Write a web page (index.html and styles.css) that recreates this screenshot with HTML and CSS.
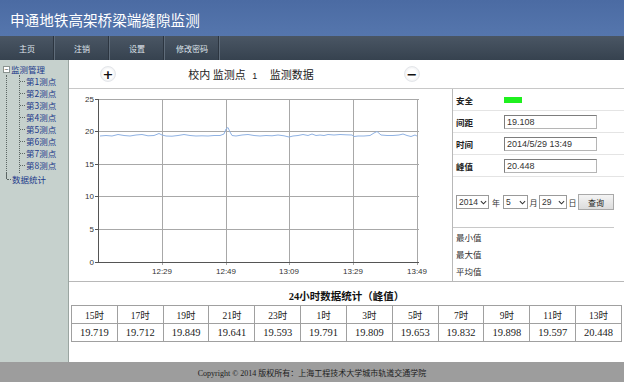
FILE: index.html
```html
<!DOCTYPE html>
<html lang="zh-CN">
  <head>
    <meta charset="UTF-8" />
    <title>申通地铁高架桥梁端缝隙监测</title>
    <link rel="stylesheet" href="styles.css">
  </head>
  <body>
    <header class="top-header">
      <h1>申通地铁高架桥梁端缝隙监测</h1>
    </header>
    <nav class="menu-bar">
      <a class="menu-item">主页</a>
      <a class="menu-item">注销</a>
      <a class="menu-item">设置</a>
      <a class="menu-item">修改密码</a>
    </nav>
    <div class="page-body">
      <aside class="side-tree">
        <div class="tree-root"><span class="tree-box">−</span><span class="tree-label">监测管理</span></div>
        <div class="tree-branch">
          <ul class="tree-leaves">
            <li><span class="tree-dash"></span>第1测点</li>
            <li><span class="tree-dash"></span>第2测点</li>
            <li><span class="tree-dash"></span>第3测点</li>
            <li><span class="tree-dash"></span>第4测点</li>
            <li><span class="tree-dash"></span>第5测点</li>
            <li><span class="tree-dash"></span>第6测点</li>
            <li><span class="tree-dash"></span>第7测点</li>
            <li><span class="tree-dash"></span>第8测点</li>
          </ul>
        </div>
        <div class="tree-last"><span class="tree-dash short"></span>数据统计</div>
      </aside>
      <main class="content">
        <div class="chart-head">
          <span class="round-btn">+</span>
          <h2 class="chart-title">校内 监测点 <span class="point-no">1</span> 监测数据</h2>
          <span class="round-btn">−</span>
        </div>
        <div class="monitor-row">
          <div class="chart-box">
            <svg width="383" height="193" viewBox="0 0 383 193">
              <g stroke="#a8a8a8" stroke-width="1">
                <line x1="29" y1="10.5" x2="350" y2="10.5" />
                <line x1="29" y1="42.5" x2="350" y2="42.5" />
                <line x1="29" y1="75.5" x2="350" y2="75.5" />
                <line x1="29" y1="107.5" x2="350" y2="107.5" />
                <line x1="29" y1="140.5" x2="350" y2="140.5" />
                <line x1="93.5" y1="10" x2="93.5" y2="176" />
                <line x1="157.5" y1="10" x2="157.5" y2="176" />
                <line x1="220.5" y1="10" x2="220.5" y2="176" />
                <line x1="284.5" y1="10" x2="284.5" y2="176" />
                <line x1="348.5" y1="10" x2="348.5" y2="176" />
              </g>
              <g stroke="#555" stroke-width="1">
                <line x1="29.5" y1="10" x2="29.5" y2="173" />
                <line x1="29" y1="173.5" x2="350" y2="173.5" />
                <line x1="26" y1="10.5" x2="29" y2="10.5" />
                <line x1="26" y1="42.5" x2="29" y2="42.5" />
                <line x1="26" y1="75.5" x2="29" y2="75.5" />
                <line x1="26" y1="107.5" x2="29" y2="107.5" />
                <line x1="26" y1="140.5" x2="29" y2="140.5" />
                <line x1="26" y1="173.5" x2="29" y2="173.5" />
              </g>
              <g class="axis-text" text-anchor="end">
                <text x="25" y="13">25</text>
                <text x="25" y="45">20</text>
                <text x="25" y="78">15</text>
                <text x="25" y="110">10</text>
                <text x="25" y="143">5</text>
                <text x="25" y="176">0</text>
              </g>
              <g class="axis-text" text-anchor="middle">
                <text x="93" y="185">12:29</text>
                <text x="157" y="185">12:49</text>
                <text x="220" y="185">13:09</text>
                <text x="284" y="185">13:29</text>
                <text x="348" y="185">13:49</text>
              </g>
              <polyline fill="none" stroke="#8fb2e3" stroke-width="1"
                points="31,47 37,46.5 43,47 49,45.5 55,46.5 61,47 67,46 73,45.5 79,46.8 85,46.5 90,44.5 93,46 97,47 103,47.2 109,46.5 115,45.5 121,46.5 127,47 133,46.8 139,47 145,46.5 151,46.5 155,45 157,40 159,38.5 161,43 163,46.5 167,47 173,46 179,45.5 185,46.5 191,47 197,46.5 203,46.8 209,46 215,46.8 220,48 224,47 229,46.5 234,45.5 239,46.5 243,45 247,46.5 251,46 255,46.5 259,45.5 265,46 271,45.5 277,45.8 283,46 285,47.5 289,47 295,47 301,46.5 305,44 308,42.5 312,46 318,46.5 324,46.5 330,46 334,45 338,46.5 342,47.5 346,46 348,47" />
            </svg>
          </div>
          <div class="info-panel">
            <div class="info-row">
              <span class="info-label">安全</span>
              <span class="safe-mark"></span>
            </div>
            <div class="info-row">
              <span class="info-label">间距</span>
              <span class="info-input">19.108</span>
            </div>
            <div class="info-row">
              <span class="info-label">时间</span>
              <span class="info-input">2014/5/29 13:49</span>
            </div>
            <div class="info-row">
              <span class="info-label">峰值</span>
              <span class="info-input">20.448</span>
            </div>
            <div class="date-row">
              <span class="fake-select year">2014<svg class="chev" width="7" height="5" viewBox="0 0 8 5"><path d="M1 1l3 3 3-3" fill="none" stroke="#333" stroke-width="1.2"/></svg></span>
              <span class="date-unit wide">年</span>
              <span class="fake-select month">5<svg class="chev" width="7" height="5" viewBox="0 0 8 5"><path d="M1 1l3 3 3-3" fill="none" stroke="#333" stroke-width="1.2"/></svg></span>
              <span class="date-unit">月</span>
              <span class="fake-select day">29<svg class="chev" width="7" height="5" viewBox="0 0 8 5"><path d="M1 1l3 3 3-3" fill="none" stroke="#333" stroke-width="1.2"/></svg></span>
              <span class="date-unit">日</span>
              <button class="query-btn">查询</button>
            </div>
            <ul class="summary">
              <li>最小值</li>
              <li>最大值</li>
              <li>平均值</li>
            </ul>
          </div>
        </div>
        <h3 class="stats-title">24小时数据统计（峰值）</h3>
        <table class="stats-table">
          <tr class="hour-row">
            <td>15时</td><td>17时</td><td>19时</td><td>21时</td><td>23时</td><td>1时</td>
            <td>3时</td><td>5时</td><td>7时</td><td>9时</td><td>11时</td><td>13时</td>
          </tr>
          <tr class="value-row">
            <td>19.719</td><td>19.712</td><td>19.849</td><td>19.641</td><td>19.593</td><td>19.791</td>
            <td>19.809</td><td>19.653</td><td>19.832</td><td>19.898</td><td>19.597</td><td>20.448</td>
          </tr>
        </table>
      </main>
    </div>
    <footer class="page-footer">Copyright © 2014 版权所有：上海工程技术大学城市轨道交通学院</footer>
  </body>
</html>
```

FILE: styles.css
```css
* {
  box-sizing: border-box;
}
body {
  margin: 0;
  width: 624px;
  height: 382px;
  overflow: hidden;
  display: flex;
  flex-direction: column;
  font-family: "Liberation Sans", "Noto Sans CJK SC", sans-serif;
  color: #222;
}

.top-header {
  flex: none;
  height: 36px;
  background: linear-gradient(#4b6ba3, #5576ad);
  display: flex;
  align-items: center;
  padding-left: 10px;
}
.top-header h1 {
  margin: 0;
  padding-top: 3px;
  font-family: "Noto Sans CJK SC", sans-serif;
  font-weight: normal;
  font-size: 14.6px;
  color: #fff;
}

.menu-bar {
  flex: none;
  height: 24px;
  display: flex;
  background: linear-gradient(#4a5664, #36424f);
}
.menu-item {
  width: 55px;
  display: flex;
  align-items: center;
  justify-content: center;
  border-right: 1px solid #5f6c7a;
  box-shadow: inset -1px 0 0 #2c3540;
  font-family: "Noto Sans CJK SC", sans-serif;
  font-size: 8px;
  color: #dfe4eb;
}

.page-body {
  flex: none;
  display: flex;
  height: 302px;
}

.side-tree {
  flex: none;
  width: 69px;
  background: #c6d1cd;
  border-right: 1px solid #9aa5a1;
  padding: 3px 0 0 3px;
  font-family: "Noto Sans CJK SC", sans-serif;
  font-size: 8.5px;
  color: #22398a;
  line-height: 12px;
  white-space: nowrap;
}
.tree-root {
  display: flex;
  align-items: center;
  height: 12px;
}
.tree-box {
  width: 7px;
  height: 7px;
  border: 1px solid #8a9390;
  background: #fff;
  font-size: 7px;
  line-height: 5px;
  text-align: center;
  color: #333;
  margin-right: 1px;
}
.tree-branch {
  margin-left: 3px;
  border-left: 1px dotted #5c6664;
}
.tree-leaves {
  list-style: none;
  margin: 0 0 0 12px;
  padding: 0 0 2px;
  border-left: 1px dotted #5c6664;
}
.tree-leaves li {
  height: 12px;
  display: flex;
  align-items: center;
}
.tree-dash {
  flex: none;
  width: 5px;
  border-top: 1px dotted #5c6664;
  margin-right: 1px;
}
.tree-dash.short {
  width: 4px;
}
.tree-last {
  margin-left: 3px;
  height: 12px;
  display: flex;
  align-items: center;
  border-left: 1px dotted #5c6664;
  border-image: linear-gradient(#5c6664 50%, transparent 50%) 1;
}

.content {
  flex: 1;
  min-width: 0;
  display: flex;
  flex-direction: column;
  background: #fff;
}

.chart-head {
  flex: none;
  height: 29px;
  display: flex;
  align-items: center;
  padding-left: 31px;
  padding-right: 204px;
  border-bottom: 1px solid #c8c8c8;
}
.round-btn {
  flex: none;
  width: 16px;
  height: 16px;
  border-radius: 50%;
  background: radial-gradient(#ffffff 45%, #e2e4e8);
  border: 1px solid #e4e6ea;
  display: flex;
  align-items: center;
  justify-content: center;
  font-family: "DejaVu Sans", sans-serif;
  font-weight: bold;
  font-size: 13px;
  line-height: 1;
  color: #111;
}
.chart-title {
  flex: 1;
  margin: 0 18px 0 0;
  text-align: center;
  font-family: "Noto Sans CJK SC", sans-serif;
  font-weight: normal;
  font-size: 11px;
  color: #222;
  white-space: nowrap;
}
.point-no {
  font-family: "Liberation Sans", sans-serif;
  font-size: 9px;
  margin: 0 10px 0 4px;
}

.monitor-row {
  flex: none;
  display: flex;
  height: 193px;
  border-bottom: 1px solid #b8b8b8;
}
.chart-box {
  flex: none;
  width: 383px;
}
.chart-box svg {
  display: block;
}
.axis-text {
  font-family: "Liberation Sans", sans-serif;
  font-size: 8px;
  fill: #333;
}

.info-panel {
  flex: 1;
  min-width: 0;
  border-left: 1px solid #b8b8b8;
  display: flex;
  flex-direction: column;
}
.info-row {
  height: 22px;
  display: flex;
  align-items: center;
  padding-left: 3px;
  border-bottom: 1px solid #e4e4e4;
}
.info-label {
  flex: none;
  width: 48px;
  font-family: "Noto Sans CJK SC", sans-serif;
  font-weight: bold;
  font-size: 8.5px;
}
.safe-mark {
  width: 18px;
  height: 6px;
  background: #1ff01f;
}
.info-input {
  width: 93px;
  height: 14px;
  border: 1px solid #7d7d7d;
  border-right-color: #b5b5b5;
  border-bottom-color: #b5b5b5;
  padding-left: 2px;
  font-size: 9px;
  line-height: 12px;
  color: #333;
  white-space: nowrap;
}

.date-row {
  height: 51px;
  display: flex;
  align-items: center;
  padding-left: 3px;
  margin-right: 10px;
  border-bottom: 1px solid #c8c8c8;
}
.fake-select {
  flex: none;
  height: 14px;
  border: 1px solid #9a9a9a;
  display: flex;
  align-items: center;
  justify-content: space-between;
  padding: 0 1px 0 2px;
  font-size: 8.5px;
  color: #333;
}
.fake-select.year {
  width: 33px;
}
.fake-select.month {
  width: 25px;
}
.fake-select.day {
  width: 28px;
}
.chev {
  display: block;
}
.date-unit {
  flex: none;
  width: 11px;
  text-align: center;
  font-family: "Noto Sans CJK SC", sans-serif;
  font-size: 8px;
  color: #333;
}
.date-unit.wide {
  width: 14px;
}
.query-btn {
  flex: none;
  width: 36px;
  height: 16px;
  padding: 0;
  border: 1px solid #a9a9a9;
  background: linear-gradient(#f4f4f4, #dcdcdc);
  font-family: "Noto Sans CJK SC", sans-serif;
  font-size: 8px;
  color: #222;
}

.summary {
  list-style: none;
  margin: 0;
  padding: 1px 0 0 3px;
  font-family: "Noto Sans CJK SC", sans-serif;
  font-size: 8.5px;
  line-height: 17px;
  color: #333;
}

.stats-title {
  flex: none;
  margin: 0;
  height: 23px;
  padding-top: 9px;
  text-align: center;
  font-family: "Liberation Serif", "Noto Sans CJK SC", serif;
  font-size: 10.5px;
  line-height: 12px;
  color: #111;
}

.stats-table {
  margin: 0 2px;
  width: 551px;
  border-collapse: collapse;
  font-family: "Liberation Serif", "Noto Sans CJK SC", serif;
  color: #222;
}
.stats-table td {
  border: 1px solid #a0a0a0;
  height: 18px;
  padding: 0;
  text-align: center;
}
.hour-row td {
  font-size: 9.5px;
}
.value-row td {
  font-size: 10.5px;
}

.page-footer {
  flex: none;
  height: 20px;
  background: #9d9d9d;
  display: flex;
  align-items: center;
  justify-content: center;
  font-family: "Liberation Serif", "Noto Sans CJK SC", serif;
  font-size: 8px;
  color: #1c1c1c;
}
```
